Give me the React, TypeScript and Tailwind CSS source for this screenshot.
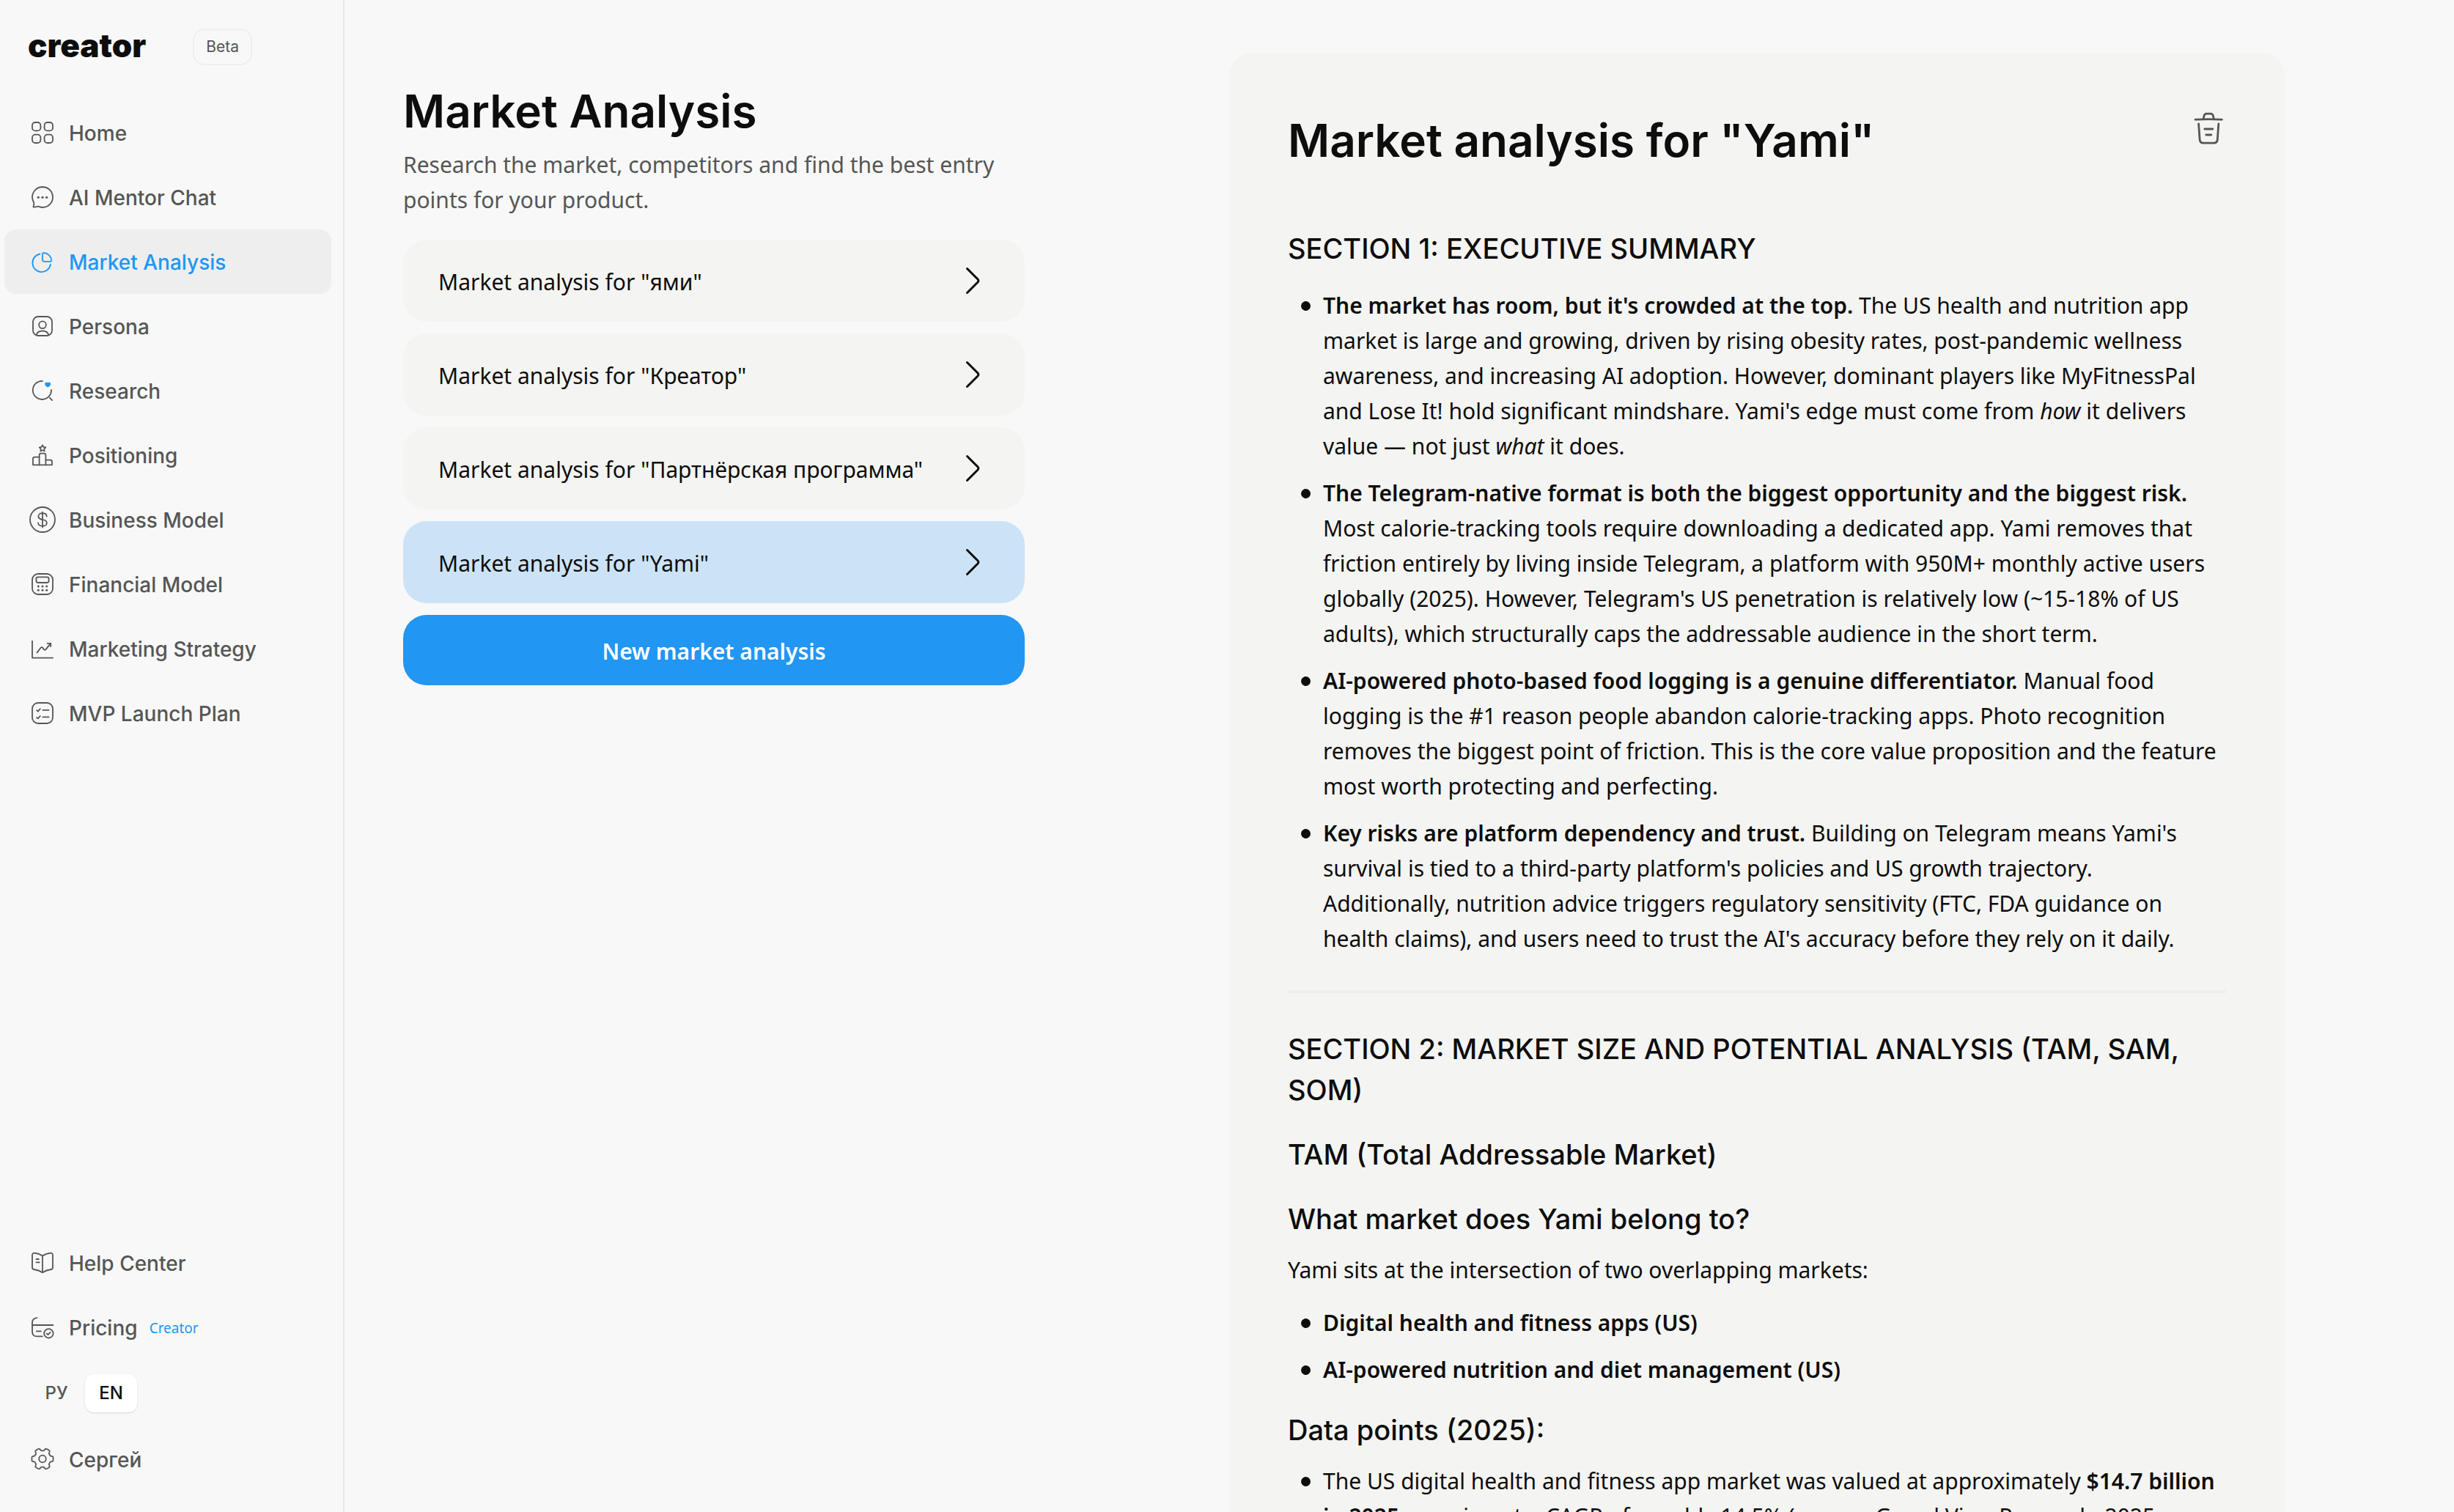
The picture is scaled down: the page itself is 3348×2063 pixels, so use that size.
import { ReactNode } from "react";

function Icon({ children }: { children: ReactNode }) {
  return (
    <svg
      className="h-9 w-9 shrink-0"
      viewBox="0 0 36 36"
      fill="none"
      stroke="currentColor"
      strokeWidth={1.8}
      strokeLinecap="round"
      strokeLinejoin="round"
      aria-hidden="true"
    >
      {children}
    </svg>
  );
}

// six wide teeth with narrow notches between them
const gearPoints = Array.from({ length: 144 }, (_, i) => {
  const angle = (i / 144) * Math.PI * 2;
  const radius = Math.max(11.2, Math.min(14.6, 13.5 + 3.8 * Math.cos(6 * angle)));
  return `${(18 + radius * Math.cos(angle)).toFixed(2)},${(17.5 + radius * Math.sin(angle)).toFixed(2)}`;
}).join(" ");

const navItems = [
  {
    label: "Home",
    icon: (
      <Icon>
        <rect x="4" y="4" width="11.4" height="11.4" rx="4" />
        <rect x="20.6" y="4" width="11.4" height="11.4" rx="4" />
        <rect x="4" y="20.6" width="11.4" height="11.4" rx="4" />
        <rect x="20.6" y="20.6" width="11.4" height="11.4" rx="4" />
      </Icon>
    ),
  },
  {
    label: "AI Mentor Chat",
    icon: (
      <Icon>
        <path d="M18 4a14 14 0 1 1 0 28c-2.2 0-4-.9-6-1.4-1.5-.3-3.4.9-5.6 1.1-1.2.1-1.2-.8-.8-1.6.7-1.5 1.1-3.3.5-4.9A14 14 0 0 1 18 4z" />
        <g fill="currentColor" stroke="none">
          <circle cx="12.3" cy="18.3" r="1.6" />
          <circle cx="18" cy="18.3" r="1.6" />
          <circle cx="23.7" cy="18.3" r="1.6" />
        </g>
      </Icon>
    ),
  },
  {
    label: "Market Analysis",
    active: true,
    icon: (
      <Icon>
        <path d="M14.4 7.5A12.4 12.4 0 1 0 29 21.6" />
        <path d="M18 7.6c0-1 .8-1.7 1.8-1.6 5.6.4 10 4.7 10.4 10.2.1 1-.6 1.6-1.5 1.6h-8.5a2.2 2.2 0 0 1-2.2-2.2z" />
      </Icon>
    ),
  },
  {
    label: "Persona",
    icon: (
      <Icon>
        <rect x="5" y="5" width="26" height="26" rx="7" />
        <circle cx="18" cy="16.3" r="4.9" />
        <path d="M9.6 30.2c1-3.4 4.4-5.7 8.4-5.7s7.4 2.3 8.4 5.7" />
      </Icon>
    ),
  },
  {
    label: "Research",
    icon: (
      <Icon>
        <path d="M18 4.8A12.6 12.6 0 1 0 30 17" />
        <path d="M27.9 27.8l3.3 3.3" />
        <path
          d="M25.2 13.6c-2.4-1.2-4-2.8-4-4.8 0-2.4 2.6-3.2 4-1.4 1.4-1.8 4-1 4 1.4 0 2-1.6 3.6-4 4.8z"
          fill="#2196f3"
          stroke="none"
        />
      </Icon>
    ),
  },
  {
    label: "Positioning",
    icon: (
      <Icon>
        <path d="M13.6 31.3V18a2.4 2.4 0 0 1 2.4-2.4h4a2.4 2.4 0 0 1 2.4 2.4v13.3" />
        <path d="M13.6 20.6H7.4A2.4 2.4 0 0 0 5 23v8.3h26V27a2.4 2.4 0 0 0-2.4-2.4h-6.2" />
        <path d="M18 4.4l1.4 2.5 2.8.6-1.9 2.1.3 2.9-2.6-1.2-2.6 1.2.3-2.9-1.9-2.1 2.8-.6z" />
      </Icon>
    ),
  },
  {
    label: "Business Model",
    icon: (
      <Icon>
        <circle cx="18" cy="18" r="17" />
        <path d="M18 7.6v20.8" />
        <path d="M23.6 13.6c0-2.6-1.8-4.2-4.4-4.2h-2.4c-2.4 0-4.4 1.8-4.4 4.2s1.5 3.4 3.6 3.9l4 1c2.1.5 3.8 1.6 3.8 4s-2 4.1-4.5 4.1h-2.5c-2.8 0-4.8-1.7-4.8-4.3" />
      </Icon>
    ),
  },
  {
    label: "Financial Model",
    icon: (
      <Icon>
        <rect x="4" y="4" width="28" height="28" rx="8" />
        <rect x="9.4" y="8.4" width="17.2" height="7.6" rx="2.4" />
        <g fill="currentColor" stroke="none">
          <circle cx="12.3" cy="21" r="1.5" />
          <circle cx="18" cy="21" r="1.5" />
          <circle cx="23.7" cy="21" r="1.5" />
          <circle cx="12.3" cy="26.2" r="1.5" />
          <circle cx="18" cy="26.2" r="1.5" />
          <circle cx="23.7" cy="26.2" r="1.5" />
        </g>
      </Icon>
    ),
  },
  {
    label: "Marketing Strategy",
    icon: (
      <Icon>
        <path d="M4 7.6v23h28" />
        <path d="M10.6 23.4l5-6.6c.8-1 1.8-1 2.6-.1l1.8 2.4c.8 1 1.8.9 2.5 0l6.6-8.2" />
        <path d="M24.6 10.8h4.6v4.4" />
      </Icon>
    ),
  },
  {
    label: "MVP Launch Plan",
    icon: (
      <Icon>
        <rect x="4" y="4" width="28" height="28" rx="8" />
        <path d="M10.2 14.2l1.6 1.4 3-3.4M10.2 24l1.6 1.4 3-3.4M18.4 13.8h8.2M18.4 23.4h8.2" />
      </Icon>
    ),
  },
];

const analyses = [
  { name: "ями" },
  { name: "Креатор" },
  { name: "Партнёрская программа" },
  { name: "Yami", selected: true },
];

function NavLink({
  label,
  icon,
  active,
  badge,
}: {
  label: string;
  icon: ReactNode;
  active?: boolean;
  badge?: string;
}) {
  return (
    <a
      href="#"
      className={`flex h-22 items-center rounded-2xl pl-[34px] font-[Inter,sans-serif] text-[28px] font-medium ${
        active ? "bg-[#eeeeee] text-[#2196f3]" : "text-[#555655]"
      }`}
    >
      {icon}
      <span className="pl-4.5 pt-0.5">{label}</span>
      {badge && (
        <span className="pl-4 pt-0.5 font-['Noto_Sans',sans-serif] text-[19px] font-normal text-[#2196f3]">
          {badge}
        </span>
      )}
    </a>
  );
}

function Sidebar() {
  return (
    <aside className="flex w-[470px] shrink-0 flex-col border-r-2 border-[#e2e8f0] pb-7 pl-1.5 pr-4 pt-[39px]">
      <div className="mb-12 flex h-[50px] items-center gap-16 pl-8">
        <span className="pb-1 font-[Inter,sans-serif] text-[44px] font-black">creator</span>
        <span className="flex h-full items-center rounded-2xl border-2 border-[#efefef] px-4 font-[Inter,sans-serif] text-[21px] text-[#555655]">
          Beta
        </span>
      </div>

      <nav className="flex flex-col">
        {navItems.map((item) => (
          <NavLink key={item.label} label={item.label} icon={item.icon} active={item.active} />
        ))}
      </nav>

      <div className="mt-auto flex flex-col">
        <NavLink
          label="Help Center"
          icon={
            <Icon>
              <path d="M18 8.6C14.6 6.2 11.2 5 6.8 4.7 5.2 4.6 4 5.6 4 7.2v17.4c0 1.4.8 2.2 2.2 2.4 4.4.6 8.2 2 11.8 4.3 3.6-2.3 7.4-3.7 11.8-4.3 1.4-.2 2.2-1 2.2-2.4V7.2c0-1.6-1.2-2.6-2.8-2.5C24.8 5 21.4 6.2 18 8.6z" />
              <path d="M18 8.6V31M9.6 13h3.2M9.6 17.4h4.2" />
            </Icon>
          }
        />
        <NavLink
          label="Pricing"
          badge="Creator"
          icon={
            <Icon>
              <path d="M10.4 5.2C6.4 5.6 4 8.2 4 12v12c0 4 2.4 6.4 6.4 6.4h7.4" />
              <path d="M4 15h28.4M9.8 23.3H16" />
              <circle cx="26.4" cy="26.3" r="6.2" />
              <path d="M23.8 26.5l1.7 1.6 3.2-3.3" />
            </Icon>
          }
        />
        <div className="flex gap-1 py-5 pl-9 font-[Inter,sans-serif] text-[24px] font-medium">
          <button className="h-[52px] w-[70px] rounded-xl text-[#555655]">РУ</button>
          <button className="h-[52px] w-[71px] rounded-xl bg-white text-[#0d0d0d] shadow-sm">EN</button>
        </div>
        <NavLink
          label="Сергей"
          icon={
            <Icon>
              <polygon points={gearPoints} />
              <circle cx="18" cy="17.5" r="4.8" />
            </Icon>
          }
        />
      </div>
    </aside>
  );
}

function AnalysisList() {
  return (
    <section className="w-[848px] pt-28">
      <h1 className="mb-2.5 font-[Inter,sans-serif] text-[62px] font-semibold leading-[79px]">
        Market Analysis
      </h1>
      <p className="mb-7.5 text-[#555655]">
        Research the market, competitors and find the best entry points for your product.
      </p>
      <div className="flex flex-col gap-4">
        {analyses.map((item) => (
          <button
            key={item.name}
            className={`flex h-28 items-center justify-between rounded-4xl px-12 text-left ${
              item.selected ? "bg-[#cce3f7]" : "bg-[#f4f4f2]"
            }`}
          >
            <span className="pt-1">Market analysis for "{item.name}"</span>
            <svg
              className="h-12 w-12"
              viewBox="0 0 48 48"
              fill="none"
              stroke="currentColor"
              strokeWidth={3}
              strokeLinecap="round"
              aria-hidden="true"
            >
              <path d="M17.5 7.5L32 22c1.2 1.2 1.2 2.8 0 4L17.5 40.5" />
            </svg>
          </button>
        ))}
        <button className="h-24 rounded-4xl bg-[#2196f3] pt-1 font-semibold text-white">
          New market analysis
        </button>
      </div>
    </section>
  );
}

const headingClass = "font-[Inter,sans-serif] text-[38px] font-medium leading-14";
const listClass = "flex list-none flex-col gap-4";

function Bullet({ children }: { children: ReactNode }) {
  return (
    <li className="flex pr-1.5">
      <span className="flex h-12 w-12 shrink-0 items-center justify-center">
        <span className="h-[13px] w-[13px] rounded-full bg-[#0d0d0d]" />
      </span>
      <div>{children}</div>
    </li>
  );
}

function Report() {
  return (
    <article className="w-[1440px] rounded-t-4xl bg-[#f4f4f2] p-20">
      <div className="mb-20 flex items-start justify-between">
        <h2 className="font-[Inter,sans-serif] text-[62px] font-semibold leading-[79px]">
          Market analysis for "Yami"
        </h2>
        <button aria-label="Delete analysis" className="text-[#555655]">
          <svg
            className="h-12 w-12"
            viewBox="0 0 48 48"
            fill="none"
            stroke="currentColor"
            strokeWidth={2.8}
            strokeLinecap="round"
            strokeLinejoin="round"
            aria-hidden="true"
          >
            <path d="M6 11.2c12-.9 24-.9 36.4 0" />
            <path d="M17.2 10.2l.6-3.4C18.2 4.2 19.4 3.2 21.6 3.2h5.2c2.2 0 3.4 1 3.8 3.6l.6 3.4" />
            <path d="M10.6 17l1.5 21.4c.2 3.2 1.7 4.8 4.9 4.8h14.4c3.2 0 4.7-1.6 4.9-4.8L37.8 17" />
            <path d="M18.8 24h11M20.8 32h7" />
          </svg>
        </button>
      </div>

      <h3 className={headingClass}>SECTION 1: EXECUTIVE SUMMARY</h3>
      <ul className={`mt-6.5 ${listClass}`}>
        <Bullet>
          <strong className="font-semibold">The market has room, but it's crowded at the top.</strong> The
          US health and nutrition app market is large and growing, driven by rising obesity rates,
          post-pandemic wellness awareness, and increasing AI adoption. However, dominant players like
          MyFitnessPal and Lose It! hold significant mindshare. Yami's edge must come from <em>how</em> it
          delivers value — not just <em>what</em> it does.
        </Bullet>
        <Bullet>
          <strong className="font-semibold">
            The Telegram-native format is both the biggest opportunity and the biggest risk.
          </strong>{" "}
          Most calorie-tracking tools require downloading a dedicated app. Yami removes that friction
          entirely by living inside Telegram, a platform with 950M+ monthly active users globally (2025).
          However, Telegram's US penetration is relatively low (~15-18% of US adults), which structurally
          caps the addressable audience in the short term.
        </Bullet>
        <Bullet>
          <strong className="font-semibold">
            AI-powered photo-based food logging is a genuine differentiator.
          </strong>{" "}
          Manual food logging is the #1 reason people abandon calorie-tracking apps. Photo recognition
          removes the biggest point of friction. This is the core value proposition and the feature most
          worth protecting and perfecting.
        </Bullet>
        <Bullet>
          <strong className="font-semibold">Key risks are platform dependency and trust.</strong> Building
          on Telegram means Yami's survival is tied to a third-party platform's policies and US growth
          trajectory. Additionally, nutrition advice triggers regulatory sensitivity (FTC, FDA guidance on
          health claims), and users need to trust the AI's accuracy before they rely on it daily.
        </Bullet>
      </ul>

      <hr className="mb-12 mt-11.5 border-t-4 border-[#eeeeee]" />

      <h3 className={headingClass}>SECTION 2: MARKET SIZE AND POTENTIAL ANALYSIS (TAM, SAM, SOM)</h3>
      <h4 className={`mt-8 ${headingClass}`}>TAM (Total Addressable Market)</h4>
      <h4 className={`mt-8 ${headingClass}`}>What market does Yami belong to?</h4>
      <p className="mt-4.5">Yami sits at the intersection of two overlapping markets:</p>
      <ul className={`mt-6 ${listClass}`}>
        <Bullet>
          <strong className="font-semibold">Digital health and fitness apps (US)</strong>
        </Bullet>
        <Bullet>
          <strong className="font-semibold">AI-powered nutrition and diet management (US)</strong>
        </Bullet>
      </ul>
      <h4 className={`mt-7.5 ${headingClass}`}>Data points (2025):</h4>
      <ul className={`mt-4.5 ${listClass}`}>
        <Bullet>
          The US digital health and fitness app market was valued at approximately{" "}
          <strong className="font-semibold">$14.7 billion in 2025</strong>, growing at a CAGR of roughly
          14.5% (source: Grand View Research, 2025
        </Bullet>
      </ul>
    </article>
  );
}

export default function App() {
  return (
    <div className="flex h-screen overflow-hidden bg-[#f8f8f8] font-['Noto_Sans',sans-serif] text-[30px] leading-12 text-[#0d0d0d]">
      <Sidebar />
      <main className="flex flex-1 items-start justify-between overflow-hidden pl-20 pr-[231px]">
        <AnalysisList />
        <div className="pt-18">
          <Report />
        </div>
      </main>
    </div>
  );
}
